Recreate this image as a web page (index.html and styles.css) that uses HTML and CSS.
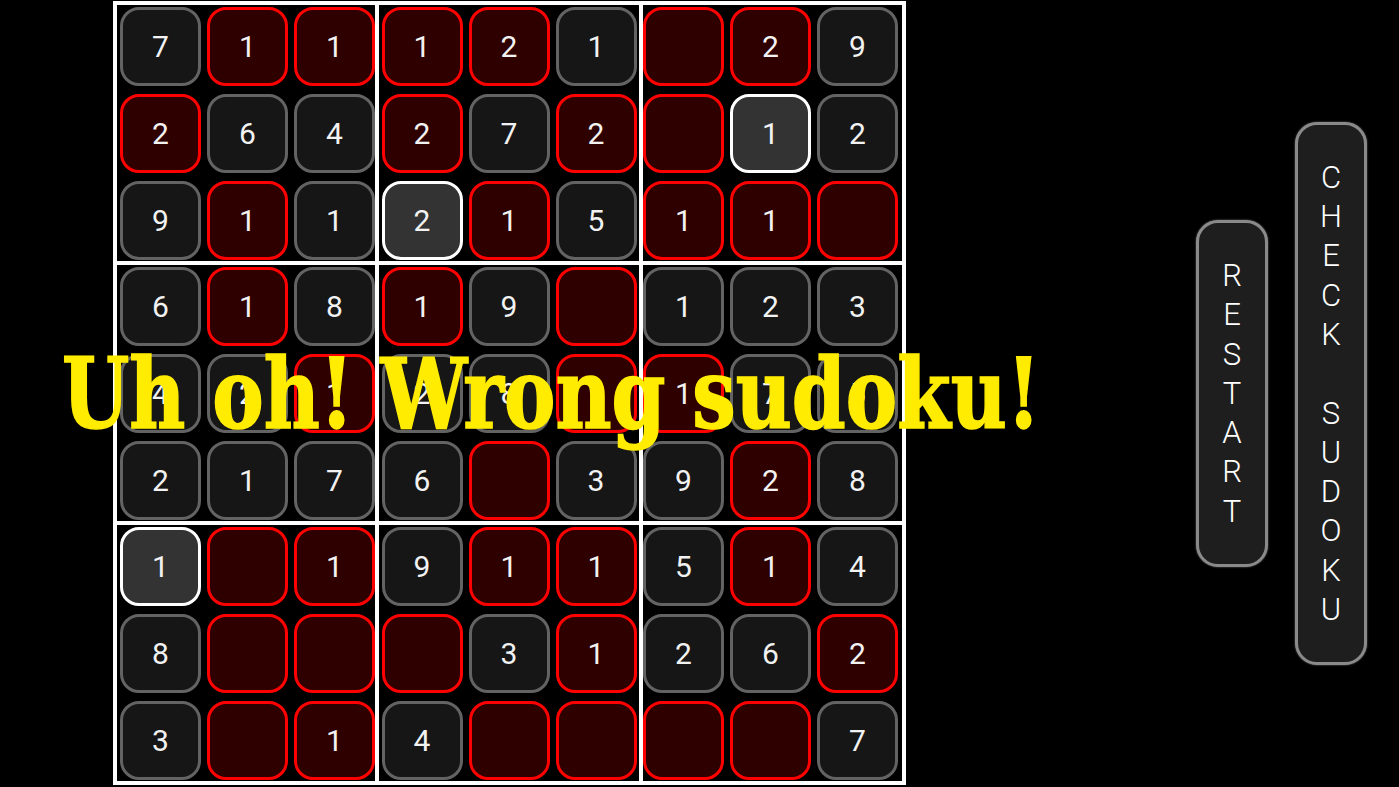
FILE: index.html
```html
<!DOCTYPE html>
<html>
<head>
<meta charset="utf-8">
<title>Sudoku</title>
<link rel="stylesheet" href="styles.css">
</head>
<body>
<div class="screen">
  <div class="board">
    <div class="box box-l">
      <div class="cell">7</div><div class="cell err">1</div><div class="cell err">1</div>
      <div class="cell err">2</div><div class="cell">6</div><div class="cell">4</div>
      <div class="cell">9</div><div class="cell err">1</div><div class="cell">1</div>
    </div>
    <div class="box box-c">
      <div class="cell err">1</div><div class="cell err">2</div><div class="cell">1</div>
      <div class="cell err">2</div><div class="cell">7</div><div class="cell err">2</div>
      <div class="cell sel">2</div><div class="cell err">1</div><div class="cell">5</div>
    </div>
    <div class="box box-r">
      <div class="cell err"></div><div class="cell err">2</div><div class="cell">9</div>
      <div class="cell err"></div><div class="cell sel">1</div><div class="cell">2</div>
      <div class="cell err">1</div><div class="cell err">1</div><div class="cell err"></div>
    </div>

    <div class="box box-l">
      <div class="cell">6</div><div class="cell err">1</div><div class="cell">8</div>
      <div class="cell">4</div><div class="cell">2</div><div class="cell err">1</div>
      <div class="cell">2</div><div class="cell">1</div><div class="cell">7</div>
    </div>
    <div class="box box-c">
      <div class="cell err">1</div><div class="cell">9</div><div class="cell err"></div>
      <div class="cell">2</div><div class="cell">8</div><div class="cell err"></div>
      <div class="cell">6</div><div class="cell err"></div><div class="cell">3</div>
    </div>
    <div class="box box-r">
      <div class="cell">1</div><div class="cell">2</div><div class="cell">3</div>
      <div class="cell err">1</div><div class="cell">7</div><div class="cell">5</div>
      <div class="cell">9</div><div class="cell err">2</div><div class="cell">8</div>
    </div>

    <div class="box box-l">
      <div class="cell sel">1</div><div class="cell err"></div><div class="cell err">1</div>
      <div class="cell">8</div><div class="cell err"></div><div class="cell err"></div>
      <div class="cell">3</div><div class="cell err"></div><div class="cell err">1</div>
    </div>
    <div class="box box-c">
      <div class="cell">9</div><div class="cell err">1</div><div class="cell err">1</div>
      <div class="cell err"></div><div class="cell">3</div><div class="cell err">1</div>
      <div class="cell">4</div><div class="cell err"></div><div class="cell err"></div>
    </div>
    <div class="box box-r">
      <div class="cell">5</div><div class="cell err">1</div><div class="cell">4</div>
      <div class="cell">2</div><div class="cell">6</div><div class="cell err">2</div>
      <div class="cell err"></div><div class="cell err"></div><div class="cell">7</div>
    </div>
  </div>

  <div class="controls">
    <div class="btn">
      <span class="ch">R</span><span class="ch">E</span><span class="ch">S</span><span class="ch">T</span><span class="ch">A</span><span class="ch">R</span><span class="ch">T</span>
    </div>
    <div class="btn">
      <span class="ch">C</span><span class="ch">H</span><span class="ch">E</span><span class="ch">C</span><span class="ch">K</span><span class="ch"> </span><span class="ch">S</span><span class="ch">U</span><span class="ch">D</span><span class="ch">O</span><span class="ch">K</span><span class="ch">U</span>
    </div>
  </div>

  <div class="message">Uh oh! Wrong sudoku!</div>
</div>
</body>
</html>
```
FILE: styles.css
```css
html, body {
  margin: 0;
  padding: 0;
  background: #000;
}
.screen {
  position: relative;
  width: 1399px;
  height: 787px;
  overflow: hidden;
  display: flex;
  align-items: flex-start;
  font-family: Roboto, "Liberation Sans", sans-serif;
}
.board {
  box-sizing: border-box;
  width: 793px;
  height: 784px;
  margin: 1px 0 0 113px;
  border: 4px solid #fff;
  background: #fff;
  display: grid;
  grid-template-columns: 258px 260px 259px;
  grid-template-rows: repeat(3, 256px);
  gap: 4px;
}
.box {
  background: #000;
  display: grid;
  grid-template-columns: repeat(3, 81px);
  grid-template-rows: repeat(3, 79px);
  column-gap: 6px;
  row-gap: 8px;
  padding-top: 2px;
  align-content: start;
}
.box-l { justify-content: end; }
.box-c { justify-content: center; }
.box-r { justify-content: start; }
.cell {
  box-sizing: border-box;
  border: 3px solid #636363;
  border-radius: 19px;
  background: #161616;
  color: #f2f2f2;
  font-size: 30px;
  display: flex;
  align-items: center;
  justify-content: center;
}
.cell.err {
  border-color: #f00;
  background: #2e0000;
}
.cell.sel {
  border-color: #fff;
  background: #333;
}
.controls {
  margin-left: auto;
  margin-right: 32px;
  align-self: center;
  display: flex;
  align-items: center;
  gap: 27px;
}
.btn {
  box-sizing: border-box;
  width: 72px;
  padding: 33px 0;
  border: 3px solid #8a8a8a;
  border-radius: 22px;
  background: #1e1e1e;
  box-shadow: 0 0 2px #777;
  display: flex;
  flex-direction: column;
  align-items: center;
}
.ch {
  display: block;
  height: 39.3px;
  line-height: 39.3px;
  font-size: 31px;
  font-weight: 300;
  color: #fff;
  white-space: pre;
}
.message {
  position: absolute;
  left: 62px;
  top: 346px;
  font-family: "DejaVu Serif Condensed", "DejaVu Serif", serif;
  font-stretch: condensed;
  font-weight: bold;
  font-size: 97px;
  line-height: 1;
  color: #ffec00;
  -webkit-text-stroke: 1.5px #ffec00;
  white-space: nowrap;
  transform: scaleX(0.884);
  transform-origin: left center;
}
```
